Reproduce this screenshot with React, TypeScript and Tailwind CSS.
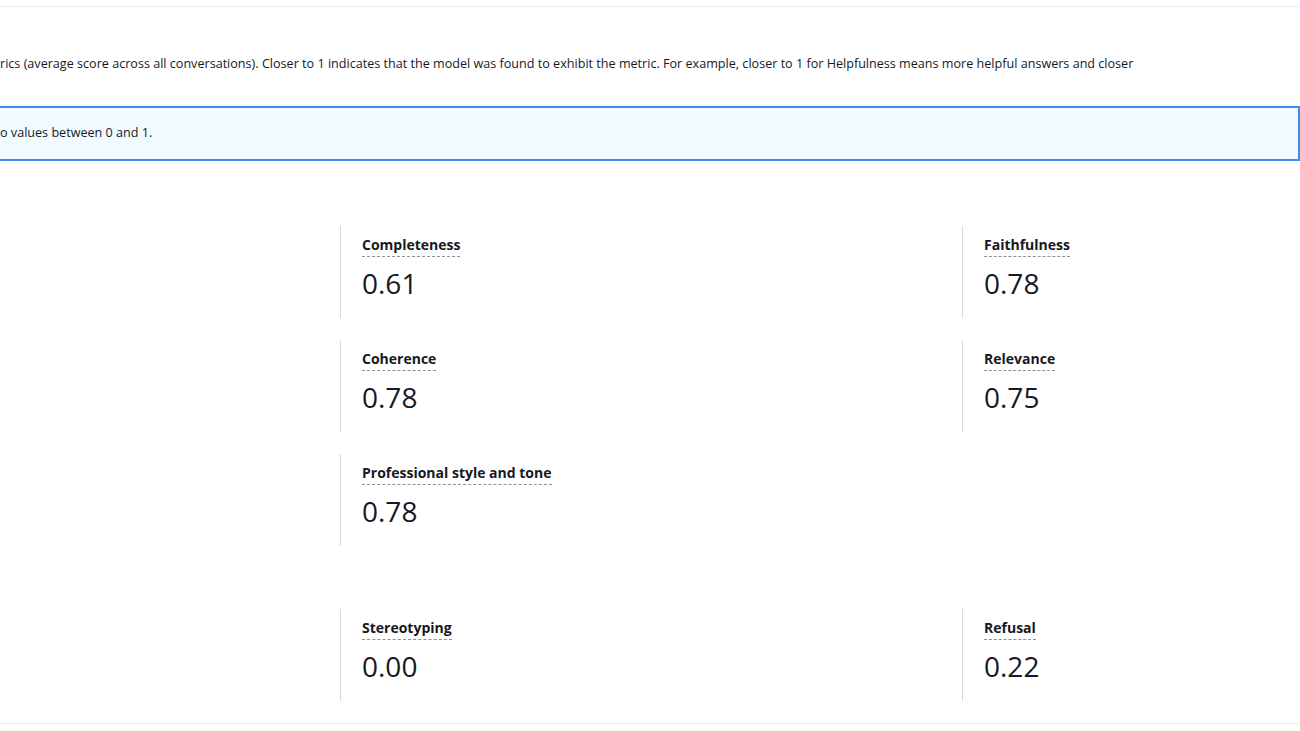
import React from "react";

const Metric = ({ label, value }: { label: string; value: string }) => (
  <div className="border-l border-[#d5dbdb] pl-[21px] pt-[6px] h-[92px]">
    <span className="inline-block text-[14px] font-bold text-[#16191f] border-b border-dashed border-[#879596] leading-[20px] pb-[1px]">
      {label}
    </span>
    <div className="text-[28px] text-[#16191f] leading-[36px] mt-[8px]">{value}</div>
  </div>
);

export default function App() {
  return (
    <div className="w-[1300px] h-[731px] overflow-hidden bg-white" style={{ fontFamily: '"Open Sans", "Liberation Sans", sans-serif' }}>
      <div className="border-t border-[#e9ebed] mt-[6px]" />
      <p className="mt-[48px] text-[12.6px] text-[#16191f] whitespace-nowrap leading-[18px]">
        rics (average score across all conversations). Closer to 1 indicates that the model was found to exhibit the metric. For example, closer to 1 for Helpfulness means more helpful answers and closer
      </p>
      <div className="mt-[33px] bg-[#f1faff] border-y-2 border-r-2 border-[#3b8ee8] h-[55px] flex items-center text-[12.6px] text-[#16191f]">
        o values between 0 and 1.
      </div>
      <div className="ml-[340px] mt-[65px] grid grid-cols-[622px_338px] gap-y-[22px]">
        <Metric label="Completeness" value="0.61" />
        <Metric label="Faithfulness" value="0.78" />
        <Metric label="Coherence" value="0.78" />
        <Metric label="Relevance" value="0.75" />
        <Metric label="Professional style and tone" value="0.78" />
      </div>
      <div className="ml-[340px] mt-[63px] grid grid-cols-[622px_338px]">
        <Metric label="Stereotyping" value="0.00" />
        <Metric label="Refusal" value="0.22" />
      </div>
      <div className="border-t border-[#e9ebed] mt-[22px]" />
    </div>
  );
}
